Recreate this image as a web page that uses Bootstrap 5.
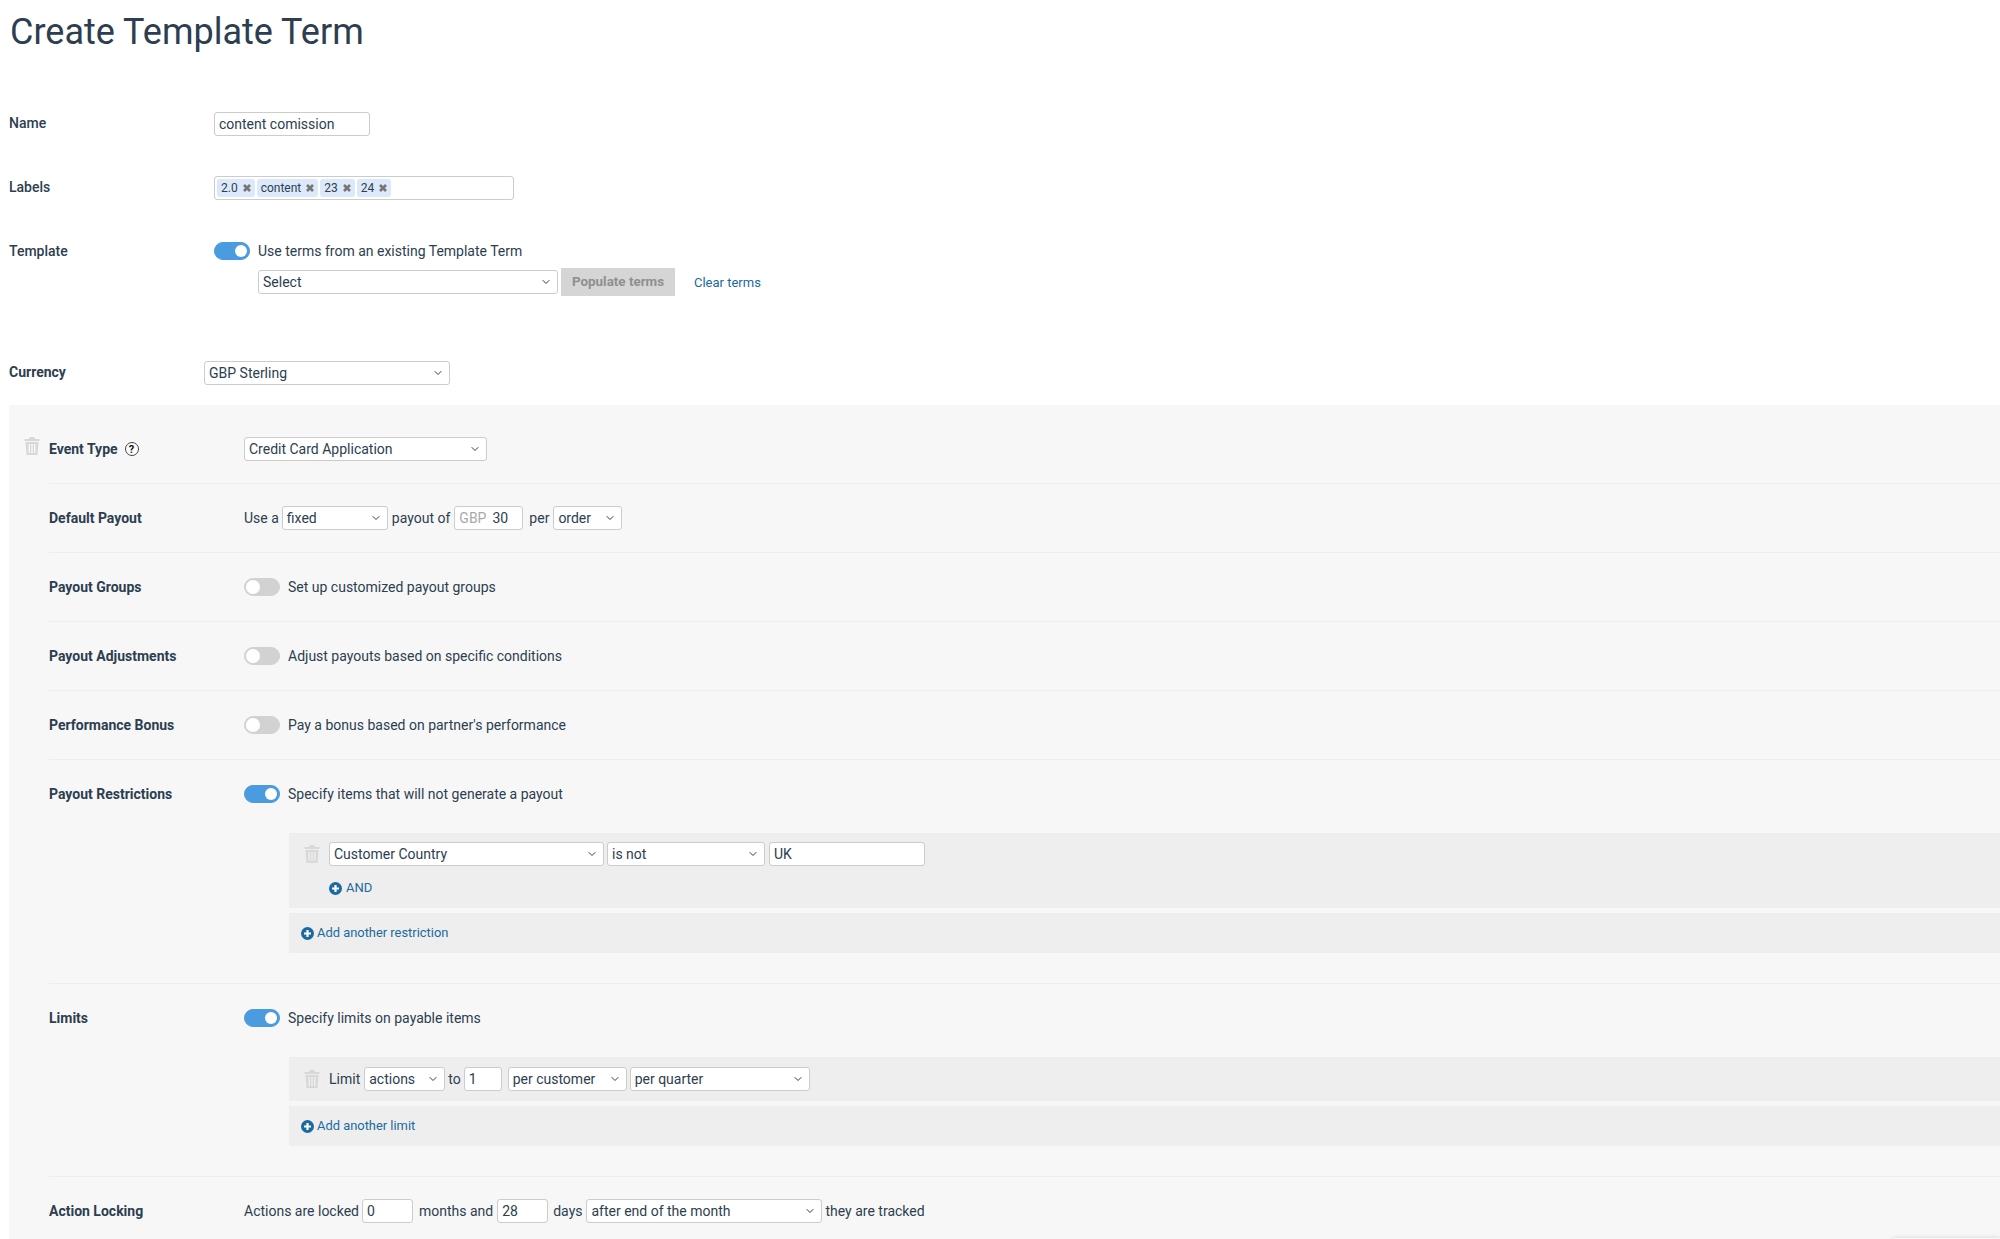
<!DOCTYPE html>
<html lang="en">
<head>
<meta charset="utf-8">
<title>Create Template Term</title>
<link href="https://cdn.jsdelivr.net/npm/bootstrap@5.3.0/dist/css/bootstrap.min.css" rel="stylesheet">
<style>
html, body { height: 100%; }
body { background: #fff; color: #2c3e50; font-family: Roboto, "Liberation Sans", sans-serif; font-size: 14px; line-height: 24px; overflow: hidden; }
.page-title { margin: 0; padding: 11px 0 0 10px; height: 112px; font-size: 36px; font-weight: 400; line-height: 43px; color: #2c3e50; }
.top-line { display: flex; padding-left: 9px; }
.top-name { width: 205px; font-weight: 500; flex: none; margin-top: -1px; }
.top-name.name-level { margin-top: 0; }
.cur-name { width: 195px; font-weight: 700; flex: none; margin-top: -1px; }
.gap-40 { margin-bottom: 40px; }
.gap-39 { margin-bottom: 39px; }
.gap-65 { margin-bottom: 65px; }
.gap-20 { margin-bottom: 20px; }
.form-control, .form-select { height: 24px; min-height: 24px; padding: 0 4px; font-size: 14px; line-height: 22px; color: #2c3e50; border: 1px solid #ccc; border-radius: 3px; background-color: #fff; }
.form-select { padding-right: 16px; background-position: right 6px center; background-size: 10px 8px; }
.form-check.form-switch { display: flex; align-items: center; min-height: 24px; padding: 0; margin: 0; }
.form-switch .form-check-input { width: 36px; height: 18px; margin: 0; float: none; background-color: #d2d2d2; border: 1px solid #d2d2d2; border-radius: 9px; --bs-form-switch-bg: url("data:image/svg+xml,%3csvg xmlns='http://www.w3.org/2000/svg' viewBox='-4 -4 8 8'%3e%3ccircle r='3.5' fill='%23fff'/%3e%3c/svg%3e"); }
.form-switch .form-check-input:checked { background-color: #4a9be0; border-color: #4a9be0; }
.form-check-label { margin-left: 8px; }
.w-156 { width: 156px; flex: none; }
.tag-box { width: 300px; height: 24px; display: flex; align-items: center; gap: 2px; padding: 0 2px; border: 1px solid #ccc; border-radius: 3px; }
.tag-chip { display: inline-flex; align-items: center; gap: 5px; height: 18px; padding: 0 4px; background: #dbe9fb; border-radius: 3px; font-size: 12px; line-height: 18px; }
.tag-x { width: 8px; height: 8px; stroke: #757575; stroke-width: 2.6; flex: none; }
.sub-line { display: flex; align-items: center; margin: 5px 0 0 44px; height: 28px; }
.w-300 { width: 300px; flex: none; }
.btn-populate { width: 114px; height: 28px; margin-left: 3px; padding: 1px 0 0; font-size: 13.4px; font-weight: 700; background: #d5d5d5; color: #8f8f8f; border: 0; border-radius: 0; opacity: 1; }
.btn-populate:disabled { background: #d5d5d5; color: #8f8f8f; opacity: 1; }
.plain-link { color: #1a6aa0; text-decoration: none; font-size: 13px; }
.clear-link { margin: 1px 0 0 19px; }
.w-246 { width: 246px; flex: none; }
.panel-main { margin-left: 9px; background: #f7f7f7; padding: 32px 0 0 40px; height: 834px; }
.field-row { display: flex; align-items: flex-start; position: relative; padding-bottom: 22px; }
.field-row + .field-row { border-top: 1px solid #eee; padding-top: 22px; }
.field-row.field-wide { display: block; padding-bottom: 0; }
.field-head { display: flex; }
.indent-col { padding-left: 195px; }
.field-name { width: 195px; flex: none; font-weight: 700; display: flex; align-items: center; }
.field-body { display: flex; align-items: center; gap: 3px; white-space: nowrap; }
.gap-wide { gap: 4px; }
.word-use { margin-right: -1px; }
.trash-abs { position: absolute; left: -25px; top: 0; }
.trash-svg { width: 16px; height: 18px; fill: #d8d8d8; flex: none; }
.help-dot { display: inline-flex; align-items: center; justify-content: center; width: 14px; height: 14px; margin-left: 7px; border: 1px solid #444; border-radius: 50%; background: #fff; color: #111; font-size: 11px; font-weight: 700; line-height: 1; }
.w-243 { width: 243px; flex: none; }
.w-106 { width: 106px; flex: none; }
.w-69 { width: 69px; flex: none; }
.money-box { display: flex; align-items: center; gap: 6px; }
.money-cur { color: #a9a9a9; }
.per-word { margin-left: 2px; }
.cond-panel { margin: 27px 0 0 45px; background: #eee; padding: 9px 0 0 15px; height: 75px; }
.cond-line { display: flex; align-items: center; gap: 3px; white-space: nowrap; }
.trash-cell { width: 22px; flex: none; display: flex; }
.w-275 { width: 275px; flex: none; }
.w-158 { width: 158px; flex: none; }
.uk-field { margin-left: 1px; }
.and-link { display: inline-flex; align-items: center; gap: 4px; margin: 10px 0 0 25px; }
.plus-svg { width: 13px; height: 13px; flex: none; }
.add-panel { margin: 5px 0 30px 45px; background: #eee; height: 40px; padding-left: 12px; display: flex; align-items: center; }
.add-panel .plain-link { display: inline-flex; align-items: center; gap: 3px; font-size: 12.9px; }
.limit-panel { margin: 27px 0 0 45px; background: #eee; height: 44px; padding: 0 0 0 15px; display: flex; align-items: center; }
.w-81 { width: 81px; flex: none; margin-left: 1px; }
.w-38 { width: 38px; flex: none; }
.w-119 { width: 119px; flex: none; margin-left: 3px; }
.w-180 { width: 180px; flex: none; }
.w-51 { width: 51px; flex: none; }
.w-236 { width: 236px; flex: none; }
.word-months { margin: 0 1px 0 3px; }
.word-days { margin: 0 1px 0 2px; }
.corner-edge { position: fixed; right: 0; top: 1238px; width: 107px; height: 10px; box-shadow: 0 0 5px rgba(0,0,0,.14); }
</style>
</head>
<body>
<h1 class="page-title">Create Template Term</h1>

<div class="top-line gap-40">
  <div class="top-name">Name</div>
  <input class="form-control w-156" type="text" value="content comission">
</div>

<div class="top-line gap-39">
  <div class="top-name">Labels</div>
  <div class="tag-box">
    <span class="tag-chip">2.0<svg class="tag-x" viewBox="0 0 8 8"><path d="M1 1l6 6M7 1l-6 6"/></svg></span>
    <span class="tag-chip">content<svg class="tag-x" viewBox="0 0 8 8"><path d="M1 1l6 6M7 1l-6 6"/></svg></span>
    <span class="tag-chip">23<svg class="tag-x" viewBox="0 0 8 8"><path d="M1 1l6 6M7 1l-6 6"/></svg></span>
    <span class="tag-chip">24<svg class="tag-x" viewBox="0 0 8 8"><path d="M1 1l6 6M7 1l-6 6"/></svg></span>
  </div>
</div>

<div class="top-line gap-65">
  <div class="top-name name-level">Template</div>
  <div>
    <div class="form-check form-switch">
      <input class="form-check-input" type="checkbox" role="switch" id="sw1" checked>
      <label class="form-check-label" for="sw1">Use terms from an existing Template Term</label>
    </div>
    <div class="sub-line">
      <select class="form-select w-300"><option>Select</option></select>
      <button class="btn btn-populate" disabled>Populate terms</button>
      <a class="plain-link clear-link" href="#">Clear terms</a>
    </div>
  </div>
</div>
<div class="top-line gap-20">
  <div class="cur-name">Currency</div>
  <select class="form-select w-246"><option>GBP Sterling</option></select>
</div>

<div class="panel-main">
  <div class="field-row">
    <svg class="trash-svg trash-abs" viewBox="0 0 16 18"><path d="M6 0h4l1 2h4.500v2H.5V2H5zM1.500 5h13l-1 13h-11zM4.500 7v9h1.500V7zM7.250 7v9h1.500V7zM10 7v9h1.500V7z" fill-rule="evenodd"/></svg>
    <div class="field-name">Event Type <span class="help-dot">?</span></div>
    <div class="field-body"><select class="form-select w-243"><option>Credit Card Application</option></select></div>
  </div>

  <div class="field-row">
    <div class="field-name">Default Payout</div>
    <div class="field-body gap-wide">
      <span class="word-use">Use a</span> <select class="form-select w-106"><option>fixed</option></select> payout of
      <div class="form-control w-69 money-box"><span class="money-cur">GBP</span><span>30</span></div>
      <span class="per-word">per</span> <select class="form-select w-69"><option>order</option></select>
    </div>
  </div>

  <div class="field-row">
    <div class="field-name">Payout Groups</div>
    <div class="form-check form-switch"><input class="form-check-input" type="checkbox" role="switch" id="sw2"><label class="form-check-label" for="sw2">Set up customized payout groups</label></div>
  </div>

  <div class="field-row">
    <div class="field-name">Payout Adjustments</div>
    <div class="form-check form-switch"><input class="form-check-input" type="checkbox" role="switch" id="sw3"><label class="form-check-label" for="sw3">Adjust payouts based on specific conditions</label></div>
  </div>

  <div class="field-row">
    <div class="field-name">Performance Bonus</div>
    <div class="form-check form-switch"><input class="form-check-input" type="checkbox" role="switch" id="sw4"><label class="form-check-label" for="sw4">Pay a bonus based on partner's performance</label></div>
  </div>

  <div class="field-row field-wide">
    <div class="field-head">
      <div class="field-name">Payout Restrictions</div>
      <div class="form-check form-switch"><input class="form-check-input" type="checkbox" role="switch" id="sw5" checked><label class="form-check-label" for="sw5">Specify items that will not generate a payout</label></div>
    </div>
    <div class="indent-col">
      <div class="cond-panel">
        <div class="cond-line">
          <span class="trash-cell"><svg class="trash-svg" viewBox="0 0 16 18"><path d="M6 0h4l1 2h4.500v2H.5V2H5zM1.500 5h13l-1 13h-11zM4.500 7v9h1.500V7zM7.250 7v9h1.500V7zM10 7v9h1.500V7z" fill-rule="evenodd"/></svg></span>
          <select class="form-select w-275"><option>Customer Country</option></select>
          <select class="form-select w-158"><option>is not</option></select>
          <input class="form-control w-156 uk-field" type="text" value="UK">
        </div>
        <a class="plain-link and-link" href="#"><svg class="plus-svg" viewBox="0 0 13 13"><circle cx="6.500" cy="6.500" r="6.500" fill="#1a6aa0"/><path d="M6.500 3v7M3 6.500h7" stroke="#fff" stroke-width="2.200"/></svg>AND</a>
      </div>
      <div class="add-panel"><a class="plain-link" href="#"><svg class="plus-svg" viewBox="0 0 13 13"><circle cx="6.500" cy="6.500" r="6.500" fill="#1a6aa0"/><path d="M6.500 3v7M3 6.500h7" stroke="#fff" stroke-width="2.200"/></svg>Add another restriction</a></div>
    </div>
  </div>

  <div class="field-row field-wide">
    <div class="field-head">
      <div class="field-name">Limits</div>
      <div class="form-check form-switch"><input class="form-check-input" type="checkbox" role="switch" id="sw6" checked><label class="form-check-label" for="sw6">Specify limits on payable items</label></div>
    </div>
    <div class="indent-col">
      <div class="limit-panel">
        <div class="cond-line">
          <span class="trash-cell"><svg class="trash-svg" viewBox="0 0 16 18"><path d="M6 0h4l1 2h4.500v2H.5V2H5zM1.500 5h13l-1 13h-11zM4.500 7v9h1.500V7zM7.250 7v9h1.500V7zM10 7v9h1.500V7z" fill-rule="evenodd"/></svg></span>
          Limit <select class="form-select w-81"><option>actions</option></select> to
          <input class="form-control w-38" type="text" value="1">
          <select class="form-select w-119"><option>per customer</option></select>
          <select class="form-select w-180"><option>per quarter</option></select>
        </div>
      </div>
      <div class="add-panel"><a class="plain-link" href="#"><svg class="plus-svg" viewBox="0 0 13 13"><circle cx="6.500" cy="6.500" r="6.500" fill="#1a6aa0"/><path d="M6.500 3v7M3 6.500h7" stroke="#fff" stroke-width="2.200"/></svg>Add another limit</a></div>
    </div>
  </div>

  <div class="field-row">
    <div class="field-name">Action Locking</div>
    <div class="field-body">
      Actions are locked <input class="form-control w-51" type="text" value="0">
      <span class="word-months">months and</span> <input class="form-control w-51" type="text" value="28">
      <span class="word-days">days</span> <select class="form-select w-236"><option>after end of the month</option></select> they are tracked
    </div>
  </div>
</div>
<div class="corner-edge"></div>
<script src="https://cdn.jsdelivr.net/npm/bootstrap@5.3.0/dist/js/bootstrap.bundle.min.js"></script>
</body>
</html>
